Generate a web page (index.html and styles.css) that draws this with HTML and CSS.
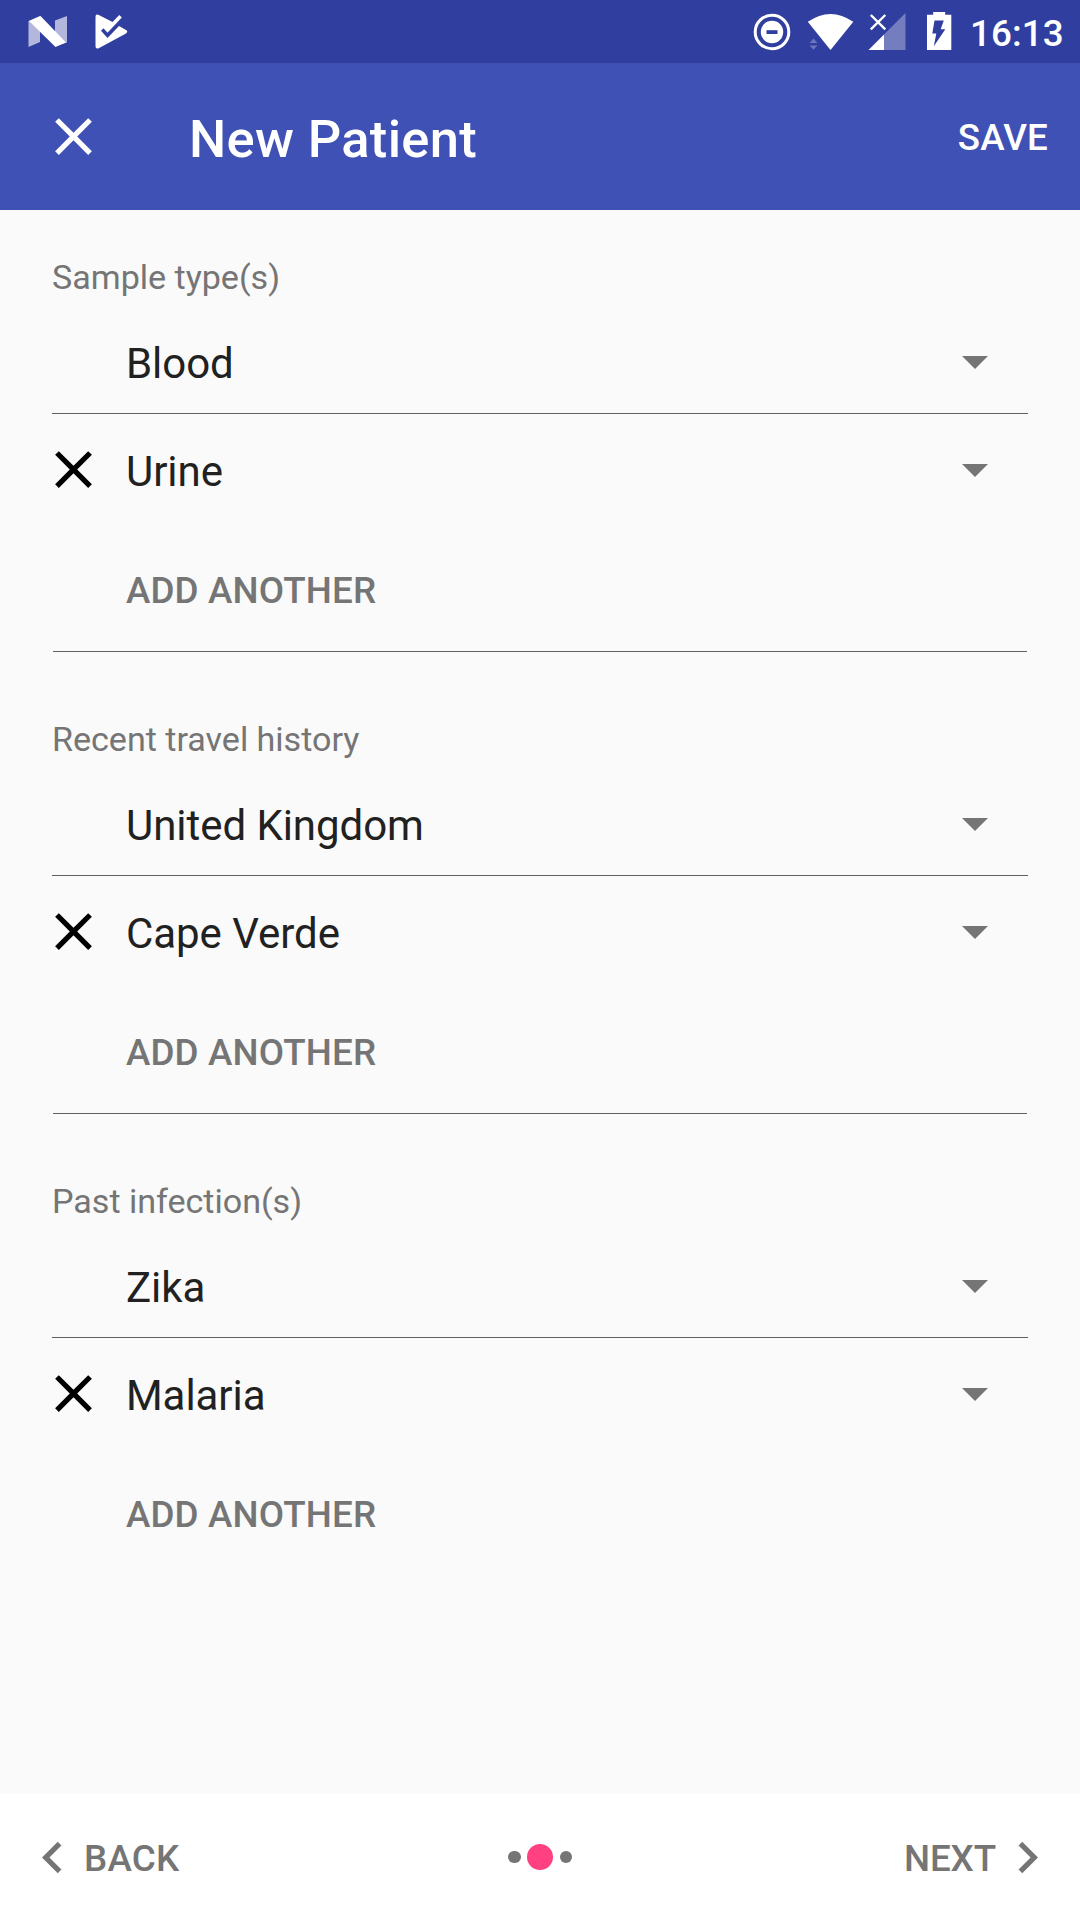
FILE: index.html
```html
<!DOCTYPE html>
<html lang="en">
<head>
<meta charset="utf-8">
<title>New Patient</title>
<link rel="stylesheet" href="styles.css">
</head>
<body>
<svg class="defs" aria-hidden="true">
  <symbol id="close" viewBox="0 0 24 24"><path d="M19 6.41 17.59 5 12 10.59 6.41 5 5 6.41 10.59 12 5 17.59 6.41 19 12 13.41 17.59 19 19 17.59 13.41 12z"/></symbol>
  <symbol id="caret" viewBox="0 0 26 13"><path d="M0 0h26L13 13z"/></symbol>
</svg>
<div class="screen">
  <div class="status-bar">
    <svg class="status-left" viewBox="0 0 140 63" width="140" height="63">
      <path fill="#b3b7dc" d="M28.500 21 40 16v26l-11.500 5zM55 20.500 67 16v26.500L55 46z"/>
      <path fill="#fff" d="M29 21 40.500 16 66 42.500 55.500 47z"/>
      <path fill="#fff" d="M95.500 17q0-3.500 3.300-2L112.500 22l6.800-7 2.500 2.500-14.300 15.300-4-4.500-2.500 2.500 6.500 7.200L119 26l7 4q2.500 1.700 0 3.500l-27.300 14.800q-3.200 1-3.200-2z"/>
    </svg>
    <svg class="status-right" viewBox="740 0 220 63" width="220" height="63">
      <circle cx="772" cy="32" r="16.800" fill="none" stroke="#fff" stroke-width="3"/>
      <circle cx="772" cy="32" r="11.200" fill="#fff"/>
      <path fill="#303f9f" d="M766.500 30.200h11v3.800h-11z"/>
      <path fill="#fff" d="M807.800 21.800Q830.500 6 853.300 21.800L830.500 50z"/>
      <path fill="#6b76bb" d="M809.500 43l4-4.500 4 4.500zM809.500 45.500h8l-4 4.300z"/>
      <path fill="#747dbd" d="M905.500 13v37H884V34.500z"/>
      <path fill="#fff" d="M884 34.500V50h-15.500z"/>
      <path stroke="#fff" stroke-width="2.400" d="m870.800 15 14.500 14.300m0-14.300-14.500 14.300"/>
      <path fill="#fff" d="M927 14.800h6.200V12h12v2.800h6.100V50H927z"/>
      <path fill="#303f9f" d="M934.500 20.500h9.300l-3.100 8.800h4.600l-11.500 17 2.500-12.800h-4z"/>
    </svg>
    <span class="clock">16:13</span>
  </div>
  <header class="app-bar">
    <svg class="icon app-close"><use href="#close"/></svg>
    <h1 class="title">New Patient</h1>
    <span class="save">SAVE</span>
  </header>
  <main class="form">
    <section class="group">
      <div class="label">Sample type(s)</div>
      <div class="row lined"><span class="lead"></span><span class="value">Blood</span><svg class="caret"><use href="#caret"/></svg></div>
      <div class="row"><span class="lead"><svg class="icon"><use href="#close"/></svg></span><span class="value">Urine</span><svg class="caret"><use href="#caret"/></svg></div>
      <div class="add">ADD ANOTHER</div>
    </section>
    <section class="group">
      <div class="label">Recent travel history</div>
      <div class="row lined"><span class="lead"></span><span class="value">United Kingdom</span><svg class="caret"><use href="#caret"/></svg></div>
      <div class="row"><span class="lead"><svg class="icon"><use href="#close"/></svg></span><span class="value">Cape Verde</span><svg class="caret"><use href="#caret"/></svg></div>
      <div class="add">ADD ANOTHER</div>
    </section>
    <section class="group">
      <div class="label">Past infection(s)</div>
      <div class="row lined"><span class="lead"></span><span class="value">Zika</span><svg class="caret"><use href="#caret"/></svg></div>
      <div class="row"><span class="lead"><svg class="icon"><use href="#close"/></svg></span><span class="value">Malaria</span><svg class="caret"><use href="#caret"/></svg></div>
      <div class="add">ADD ANOTHER</div>
    </section>
  </main>
  <footer class="nav">
    <div class="nav-button">
      <svg class="icon" viewBox="0 0 24 24"><path d="M15.410 7.410 14 6l-6 6 6 6 1.410-1.410L10.830 12z"/></svg>
      <span class="back">BACK</span>
    </div>
    <div class="dots"><span class="dot"></span><span class="dot active"></span><span class="dot"></span></div>
    <div class="nav-button next">
      <span>NEXT</span>
      <svg class="icon" viewBox="0 0 24 24"><path d="M10 6 8.590 7.410 13.170 12l-4.580 4.590L10 18l6-6z"/></svg>
    </div>
  </footer>
</div>
</body>
</html>
```
FILE: styles.css
```css
* { box-sizing: border-box; }
body { margin: 0; font-family: Roboto, sans-serif; }
.defs { position: absolute; width: 0; height: 0; }
.screen {
  width: 1080px;
  height: 1920px;
  display: flex;
  flex-direction: column;
  background: #fafafa;
  overflow: hidden;
}
.icon { width: 63px; height: 63px; flex: none; display: block; fill: currentColor; }

.status-bar {
  height: 63px;
  flex: none;
  display: flex;
  background: #303f9f;
  color: #fff;
}
.status-left, .status-right { display: block; flex: none; }
.status-right { margin-left: auto; }
.clock {
  width: 120px;
  padding-left: 10px;
  font-size: 36.75px;
  font-weight: 500;
  line-height: 67px;
  letter-spacing: 0.1px;
}

.app-bar {
  height: 147px;
  flex: none;
  display: flex;
  align-items: center;
  padding: 0 32px 0 42px;
  background: #3f51b5;
  color: #fff;
}
.app-close { margin-bottom: 1px; }
.title {
  margin: 4px 0 0 84px;
  font-size: 52.5px;
  font-weight: 500;
  line-height: 62px;
  letter-spacing: 0.32px;
}
.save {
  margin: 1px 0 0 auto;
  font-size: 36.75px;
  font-weight: 500;
  letter-spacing: 0.15px;
}

.form { flex: 1; padding: 0 52px; }
.label {
  height: 96px;
  padding-top: 39px;
  font-size: 34.125px;
  line-height: 57px;
  letter-spacing: -0.03px;
  color: #757575;
}
.group + .group .label { height: 116px; padding-top: 59px; }
.row {
  height: 108px;
  padding-top: 8px;
  display: flex;
  align-items: center;
  color: #212121;
}
.lined { border-bottom: 1px solid #616161; }
.lead {
  width: 74px;
  flex: none;
  margin: 0 0 5px;
  color: #000;
}
.lead .icon { margin-left: -10px; }
.value {
  flex: 1;
  font-size: 42px;
  line-height: 50px;
  letter-spacing: -0.05px;
}
.caret { width: 26px; height: 13px; margin: 0 40px 3px 0; fill: #757575; }
.lined .caret { margin-bottom: 2px; }
.add {
  height: 130px;
  margin: 0 1px;
  padding: 8px 0 0 73px;
  border-bottom: 1px solid #616161;
  font-size: 36.75px;
  font-weight: 500;
  line-height: 121px;
  letter-spacing: 0.13px;
  color: #757575;
}
.group:last-child .add { border-bottom: 0; }

.nav {
  height: 126px;
  flex: none;
  display: grid;
  grid-template-columns: 1fr auto 1fr;
  align-items: center;
  padding: 0 21px;
  background: #fff;
  color: #757575;
}
.nav-button {
  display: flex;
  align-items: center;
  font-size: 36.75px;
  font-weight: 500;
}
.next { justify-content: flex-end; }
.nav-button span { margin-top: 3px; }
.nav-button .back { letter-spacing: 0.25px; }
.next span { letter-spacing: -0.1px; }
.dots { display: flex; align-items: center; gap: 6.5px; }
.dot { width: 12.5px; height: 12.5px; border-radius: 50%; background: #757575; }
.active { width: 26px; height: 26px; background: #ff4081; }
```
